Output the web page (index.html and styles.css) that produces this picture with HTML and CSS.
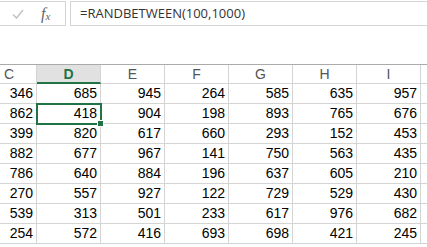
FILE: index.html
```html
<!DOCTYPE html>
<html lang="en">
<head>
<meta charset="UTF-8">
<title>Sheet</title>
<link rel="stylesheet" href="styles.css">
</head>
<body>
<!-- Formula bar -->
<div class="fbar">
  <div class="fbtns">
    <svg class="check" width="12" height="10" viewBox="0 0 12 10"><path d="M1 5.5 L4.5 9 L11 1" fill="none" stroke="#c4c4c4" stroke-width="1.6"/></svg>
    <span class="fx">f<sub>x</sub></span>
  </div>
  <div class="fformula">=RANDBETWEEN(100,1000)</div>
</div>

<!-- Grid -->
<div class="view">
<div class="sheet">
  <div class="hdr">
    <div class="col c">C</div><div class="col sel">D</div><div class="col">E</div><div class="col">F</div><div class="col">G</div><div class="col">H</div><div class="col">I</div><div class="col"></div>
  </div>
  <div id="rows"></div>
</div>
</div>

<script>
const data=[
  [346,685,945,264,585,635,957],
  [862,418,904,198,893,765,676],
  [399,820,617,660,293,152,453],
  [882,677,967,141,750,563,435],
  [786,640,884,196,637,605,210],
  [270,557,927,122,729,529,430],
  [539,313,501,233,617,976,682],
  [254,572,416,693,698,421,245]
];
const rows=document.getElementById("rows");
data.forEach((r,i)=>{
  const row=document.createElement("div");row.className="row";
  r.forEach((v,j)=>{
    const c=document.createElement("div");
    c.className="cell"+(i===1&&j===1?" active":"");
    c.textContent=v;
    if(i===1&&j===1){const h=document.createElement("span");h.className="handle";c.appendChild(h);}
    row.appendChild(c);
  });
  const e=document.createElement("div");e.className="cell";row.appendChild(e);
  rows.appendChild(row);
});
</script>
</body>
</html>
```

FILE: styles.css
```css
body{margin:0;background:#fff;font-family:"Open Sans","Liberation Sans",Arial,sans-serif;overflow:hidden;width:427px;height:247px;}
.fbar{display:flex;height:25px;margin-top:1px;gap:4px;}
.fbtns{width:66px;border-top:1px solid #d4d4d4;border-bottom:1px solid #d4d4d4;border-right:1px solid #d4d4d4;display:flex;align-items:center;box-sizing:border-box;padding-left:12px;}
.check{margin-right:17px;}
.fx{font-family:"Liberation Serif",serif;font-style:italic;font-size:16px;color:#666;}
.fx sub{font-size:11px;vertical-align:-1px;}
.fformula{flex:1;border:1px solid #d4d4d4;border-right:none;font-family:"Open Sans",sans-serif;font-size:13px;color:#333;padding-left:9px;line-height:23px;box-sizing:border-box;}
.view{margin-top:38px;width:427px;height:182px;overflow:hidden;}
.sheet{margin-left:-27px;width:512px;}
.hdr{display:flex;height:20px;border-top:1px solid #ababab;box-sizing:border-box;}
.col{width:64px;flex:0 0 64px;border-right:1px solid #d4d4d4;box-sizing:border-box;text-align:center;font-family:"Liberation Sans",sans-serif;font-size:14px;color:#555;line-height:19px;border-bottom:1px solid #d4d4d4;}
.col.c{text-align:right;padding-right:22px;}
.col.sel{background:#e1e1e1;color:#217346;font-weight:bold;border-bottom:2px solid #217346;}
.row{display:flex;height:20px;}
.cell{position:relative;width:64px;flex:0 0 64px;border-right:1px solid #d4d4d4;border-bottom:1px solid #d4d4d4;box-sizing:border-box;text-align:right;padding-right:3px;font-family:"Liberation Sans",sans-serif;font-size:14px;color:#000;line-height:19px;}
.cell.active{outline:2px solid #217346;outline-offset:-1px;z-index:1;}
.handle{position:absolute;right:-4px;bottom:-4px;width:5px;height:5px;background:#217346;border:1px solid #fff;}
```
